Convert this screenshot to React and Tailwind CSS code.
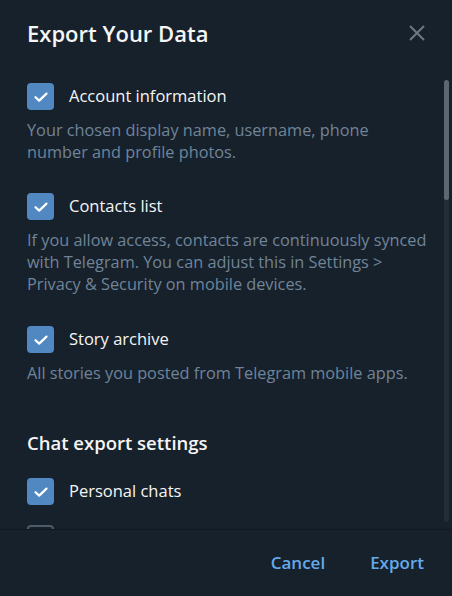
import React from "react";

function Check({ on = true }) {
  return on ? (
    <div className="w-[27px] h-[27px] rounded-[4px] bg-[#5288c1] flex items-center justify-center shrink-0">
      <svg width="16" height="12" viewBox="0 0 16 12" fill="none">
        <path d="M2.5 6.2L6.2 9.6L13.5 2.6" stroke="white" strokeWidth="2.2" strokeLinecap="round" strokeLinejoin="round" />
      </svg>
    </div>
  ) : (
    <div className="w-[27px] h-[27px] rounded-[4px] border-2 border-[#4d5a67] shrink-0" />
  );
}

function Row({ label }) {
  return (
    <div className="flex items-center gap-[15px] h-[27px]">
      <Check />
      <span className="text-[16.5px] text-[#f5f5f5]">{label}</span>
    </div>
  );
}

function Desc({ children }) {
  return <p className="text-[16.3px] leading-[22px] text-[#708499] mt-[9px] pr-[10px]">{children}</p>;
}

export default function App() {
  return (
    <div className="w-[452px] h-[596px] bg-[#17212b] flex flex-col overflow-hidden" style={{ fontFamily: '"Open Sans", sans-serif' }}>
      <div className="flex items-center justify-between pl-[27px] pr-[26px] h-[68px] shrink-0">
        <h1 className="text-[22px] font-semibold text-[#f5f5f5] -mt-[1px]">Export Your Data</h1>
        <svg width="18" height="18" viewBox="0 0 18 18" className="-mt-[2px]">
          <path d="M2 2L16 16M16 2L2 16" stroke="#6c7883" strokeWidth="2" />
        </svg>
      </div>
      <div className="relative flex-1 overflow-hidden">
        <div className="pl-[27px] pr-[12px] pt-[15px]">
          <Row label="Account information" />
          <Desc>Your chosen display name, username, phone number and profile photos.</Desc>
          <div className="h-[30px]" />
          <Row label="Contacts list" />
          <Desc>If you allow access, contacts are continuously synced with Telegram. You can adjust this in Settings &gt; Privacy &amp; Security on mobile devices.</Desc>
          <div className="h-[31px]" />
          <Row label="Story archive" />
          <Desc>All stories you posted from Telegram mobile apps.</Desc>
          <h2 className="text-[18.5px] leading-[26px] font-semibold text-[#f5f5f5] mt-[46px] mb-[22px]">Chat export settings</h2>
          <Row label="Personal chats" />
          <div className="mt-[20px]">
            <Check on={false} />
          </div>
        </div>
        <div className="absolute right-[3px] top-[12px] bottom-[7px] w-[5px] rounded-full bg-[#222d38]">
          <div className="h-[120px] w-full rounded-full bg-[#5d6770]" />
        </div>
      </div>
      <div className="h-[67px] shrink-0 border-t border-[#101820] flex items-center justify-end gap-[45px] pr-[28px] pb-[1px]">
        <span className="text-[17px] font-semibold text-[#64aaec]">Cancel</span>
        <span className="text-[17px] font-semibold text-[#64aaec]">Export</span>
      </div>
    </div>
  );
}
